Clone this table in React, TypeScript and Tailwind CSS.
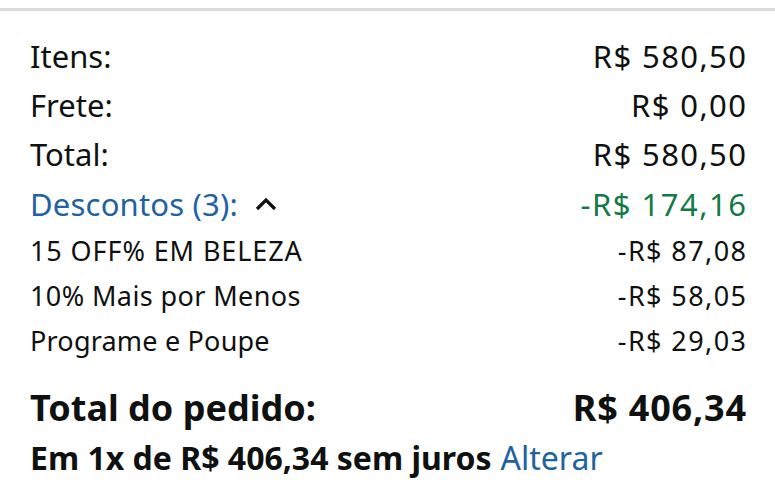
import React from "react";

const font = { fontFamily: '"Noto Sans", Roboto, sans-serif' };

function Row({ label, value, cls, lcls = "" }: { label: React.ReactNode; value: string; cls: string; lcls?: string }) {
  return (
    <div className={`flex items-center justify-between ${cls}`}>
      <span className={lcls}>{label}</span>
      <span className="tracking-[1.4px] -mr-[1.4px]">{value}</span>
    </div>
  );
}

export default function App() {
  return (
    <div className="w-[775px] h-[500px] bg-white text-[#0f1111] overflow-hidden" style={font}>
      <div className="h-[8px]" />
      <div className="h-[3px] bg-[#d9dcdc]" />
      <div className="pl-[30px] pr-[29px] pt-[21px]">
        <Row label="Itens:" value="R$ 580,50" cls="h-[49px] text-[31px]" />
        <Row label="Frete:" value="R$ 0,00" cls="h-[49px] text-[31px]" />
        <Row label="Total:" value="R$ 580,50" cls="h-[49px] text-[31px]" />
        <div className="flex items-center justify-between h-[50px] text-[31px]">
          <span className="flex items-center text-[#2162a1] tracking-[0.2px]">
            Descontos (3):
            <svg className="ml-[17px]" width="22" height="14" viewBox="0 0 22 14" fill="none">
              <path d="M2 12 L11 3 L20 12" stroke="#0f1111" strokeWidth="3.2" />
            </svg>
          </span>
          <span className="text-[#117a47] tracking-[1.5px] -mr-[1.5px]">-R$ 174,16</span>
        </div>
        <Row label="15 OFF% EM BELEZA" lcls="tracking-[0.9px]" value="-R$ 87,08" cls="h-[45px] text-[27px]" />
        <Row label="10% Mais por Menos" lcls="tracking-[0.4px]" value="-R$ 58,05" cls="h-[45px] text-[27px]" />
        <Row label="Programe e Poupe" lcls="tracking-[0.2px]" value="-R$ 29,03" cls="h-[45px] text-[27px]" />
        <div className="mt-[19px] flex items-center justify-between h-[50px] text-[36px] font-bold">
          <span>Total do pedido:</span>
          <span className="tracking-[0.8px] -mr-[0.8px]">R$ 406,34</span>
        </div>
        <div className="flex items-center h-[50px] text-[32px]">
          <span className="font-bold">Em 1x de R$ 406,34 sem juros</span>
          <span className="ml-[9px] text-[#2162a1]">Alterar</span>
        </div>
      </div>
    </div>
  );
}
